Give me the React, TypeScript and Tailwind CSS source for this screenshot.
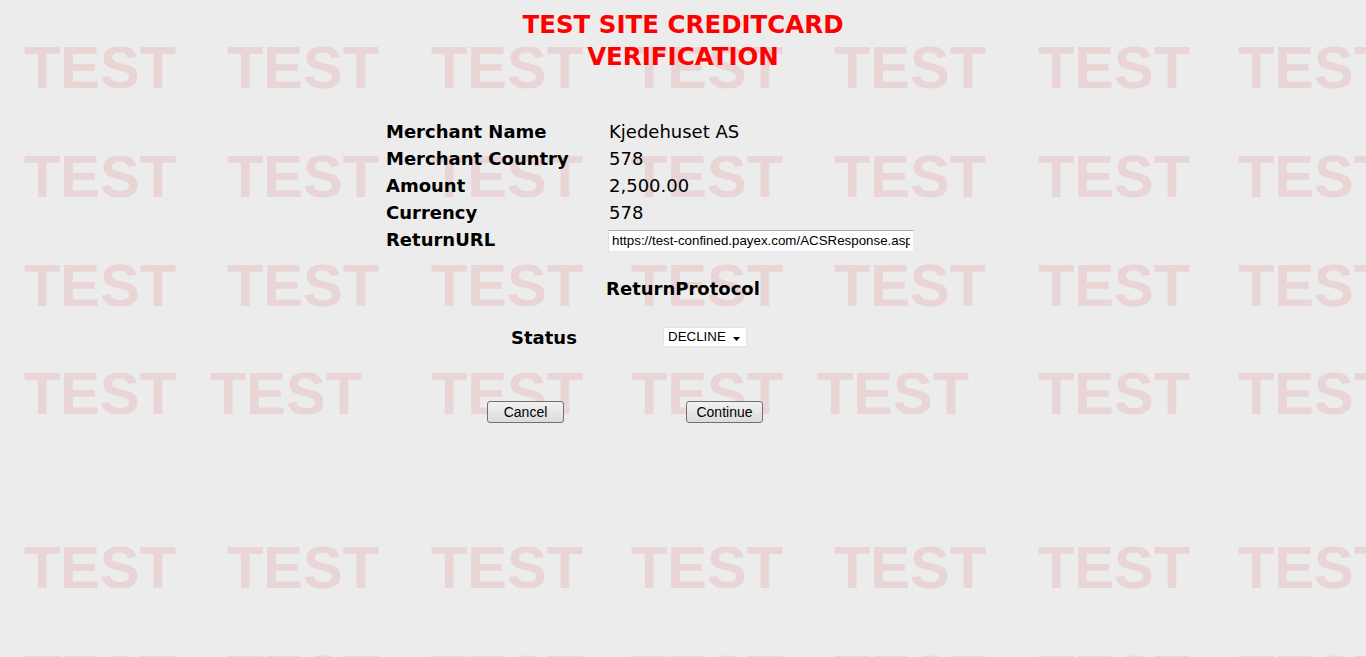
import { useState } from "react";

// watermark tile: 607x500, three words per row, 4th row shifted
const rows = [
  { y: 88, xs: [24, 227, 431] },
  { y: 197, xs: [24, 227, 431] },
  { y: 306, xs: [24, 227, 431] },
  { y: 414, xs: [24, 210, 431] },
];

function Watermark() {
  return (
    <svg className="pointer-events-none absolute inset-0 h-full w-full" aria-hidden="true">
      <defs>
        <pattern id="test-tile" width="607" height="500" patternUnits="userSpaceOnUse">
          {rows.map((r) =>
            r.xs.map((x) => (
              <text
                key={`${r.y}-${x}`}
                x={x}
                y={r.y}
                fill="#e9d5d5"
                fontFamily="'Liberation Sans', Arial, sans-serif"
                fontWeight="700"
                fontSize="59.5"
              >
                TEST
              </text>
            ))
          )}
        </pattern>
      </defs>
      <rect width="100%" height="100%" fill="url(#test-tile)" />
    </svg>
  );
}

const details = [
  { label: "Merchant Name", value: "Kjedehuset AS" },
  { label: "Merchant Country", value: "578" },
  { label: "Amount", value: "2,500.00" },
  { label: "Currency", value: "578" },
];

export default function App() {
  const [status, setStatus] = useState("DECLINE");
  const [returnUrl, setReturnUrl] = useState(
    "https://test-confined.payex.com/ACSResponse.aspx"
  );

  return (
    <div className="relative min-h-screen overflow-hidden bg-[#ececec] font-['DejaVu_Sans',Verdana,sans-serif] text-black">
      <Watermark />

      <div className="relative">
        {/* Title */}
        <h1 className="pt-[9px] text-center text-[24.5px] font-bold leading-[32px] text-[#ff0000]">
          TEST SITE CREDITCARD
          <br />
          VERIFICATION
        </h1>

        {/* Details */}
        <div className="mx-auto mt-[45px] grid w-[594px] grid-cols-[223px_1fr] text-[18px] leading-[27px]">
          {details.map((d) => (
            <div key={d.label} className="contents">
              <div className="font-bold">{d.label}</div>
              <div>{d.value}</div>
            </div>
          ))}
          <div className="font-bold">ReturnURL</div>
          <div className="flex items-center">
            <input
              type="text"
              value={returnUrl}
              onChange={(e) => setReturnUrl(e.target.value)}
              className="-ml-px mt-[2px] h-[22px] w-[306px] border border-t-[#abadb3] border-l-[#dbdfe6] border-r-[#e3e9ef] border-b-[#e3e9ef] bg-white px-[3px] font-['Liberation_Sans',Arial,sans-serif] text-[13.33px] text-black outline-none"
            />
          </div>
        </div>

        {/* Return protocol */}
        <h2 className="mt-[22px] text-center text-[18px] font-bold leading-[27px]">
          ReturnProtocol
        </h2>

        <div className="mx-auto mt-[22px] flex w-[594px] items-center">
          <div className="ml-[125px] w-[152px] text-[18px] font-bold leading-[27px]">Status</div>
          <div className="relative mb-[2px]">
            <select
              value={status}
              onChange={(e) => setStatus(e.target.value)}
              className="block h-[20px] w-[84px] appearance-none border border-[#e3e3e3] bg-white pl-[4px] font-['Liberation_Sans',Arial,sans-serif] text-[13.33px] leading-[18px] text-black outline-none"
            >
              <option>ACCEPT</option>
              <option>DECLINE</option>
            </select>
            <svg
              className="pointer-events-none absolute right-[7px] top-[10px]"
              width="7"
              height="4"
              viewBox="0 0 7 4"
            >
              <path d="M0 0h7L3.5 4z" fill="#000" />
            </svg>
          </div>
        </div>

        {/* Buttons */}
        <div className="mx-auto mt-[50px] flex w-[594px] font-['Liberation_Sans',Arial,sans-serif] text-[14px]">
          <button className="ml-[101px] h-[22px] w-[77px] rounded-[3px] border border-[#707070] bg-gradient-to-b from-[#f2f2f2] to-[#dcdcdc] leading-[20px] text-black">
            Cancel
          </button>
          <button className="ml-[122px] h-[22px] w-[77px] rounded-[3px] border border-[#707070] bg-gradient-to-b from-[#f2f2f2] to-[#dcdcdc] leading-[20px] text-black">
            Continue
          </button>
        </div>
      </div>
    </div>
  );
}
